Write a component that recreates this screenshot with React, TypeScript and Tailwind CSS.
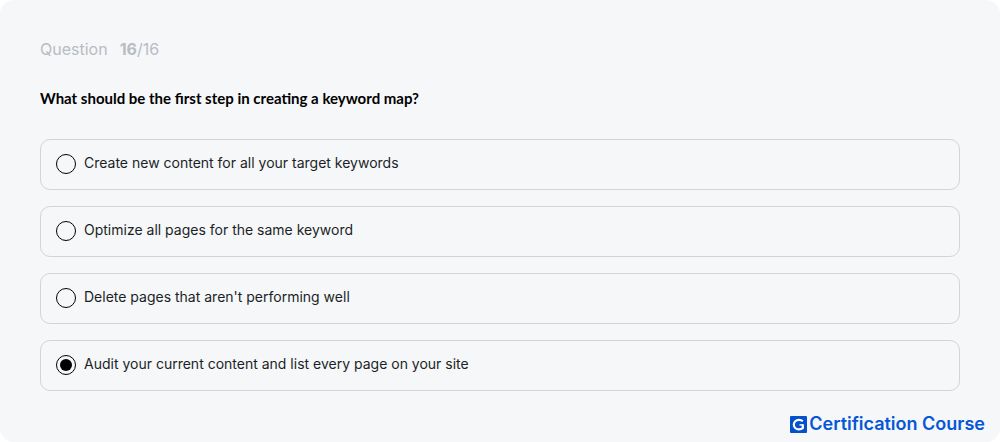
import { useState } from 'react';

const options = [
  'Create new content for all your target keywords',
  'Optimize all pages for the same keyword',
  "Delete pages that aren't performing well",
  'Audit your current content and list every page on your site',
];

interface OptionProps {
  label: string;
  checked: boolean;
  onSelect: () => void;
}

function Option({ label, checked, onSelect }: OptionProps) {
  return (
    <label className="flex cursor-pointer items-start gap-2 rounded-[10px] border border-[#d1d4d9] px-[15px] pt-[14px] pb-[15px]">
      <input
        type="radio"
        name="answer"
        checked={checked}
        onChange={onSelect}
        className="size-5 shrink-0 appearance-none rounded-full border border-black bg-transparent p-[3px] before:block before:size-3 before:rounded-full checked:before:bg-black"
      />
      <span className="text-[14px] leading-[18px] text-[#1c1f26]">{label}</span>
    </label>
  );
}

function Brand() {
  return (
    <div className="flex items-center justify-end gap-0.5 text-[#0557d5]">
      <svg viewBox="0 0 17 17" className="size-[17px]" aria-hidden="true">
        <rect width="17" height="17" rx="1" fill="#0550cb" />
        <path
          d="M12.8 5.2C11.8 4.2 10.5 3.9 8.9 3.9C6 3.9 3.8 5.8 3.8 8.6C3.8 11.4 6 13.3 8.8 13.3C10.4 13.3 11.8 12.9 12.8 12.1V8.4"
          fill="none"
          stroke="#fff"
          strokeWidth="2.2"
        />
        <path d="M9.5 8.9H13.5" stroke="#fff" strokeWidth="1.4" />
      </svg>
      <span className="text-[18px] leading-5 font-semibold">Certification Course</span>
    </div>
  );
}

export default function App() {
  const [selected, setSelected] = useState(3);

  return (
    <main className="rounded-[14px] bg-[#f5f7f9] pt-[37px] pb-2 font-['Inter',sans-serif]">
      <div className="px-10">
        <p className="flex gap-3 text-[16px] leading-6 text-[#b9bcc3]">
          <span>Question</span>
          <span>
            <b className="font-bold">16</b>/16
          </span>
        </p>
        <fieldset>
          <legend className="pt-[27px] pb-[31px] font-['Lato',sans-serif] text-[15px] leading-5 font-bold text-black">
            What should be the first step in creating a keyword map?
          </legend>
          <div className="flex flex-col gap-4">
            {options.map((label, i) => (
              <Option key={label} label={label} checked={selected === i} onSelect={() => setSelected(i)} />
            ))}
          </div>
        </fieldset>
      </div>
      <footer className="px-[15px] pt-[23px]">
        <Brand />
      </footer>
    </main>
  );
}
